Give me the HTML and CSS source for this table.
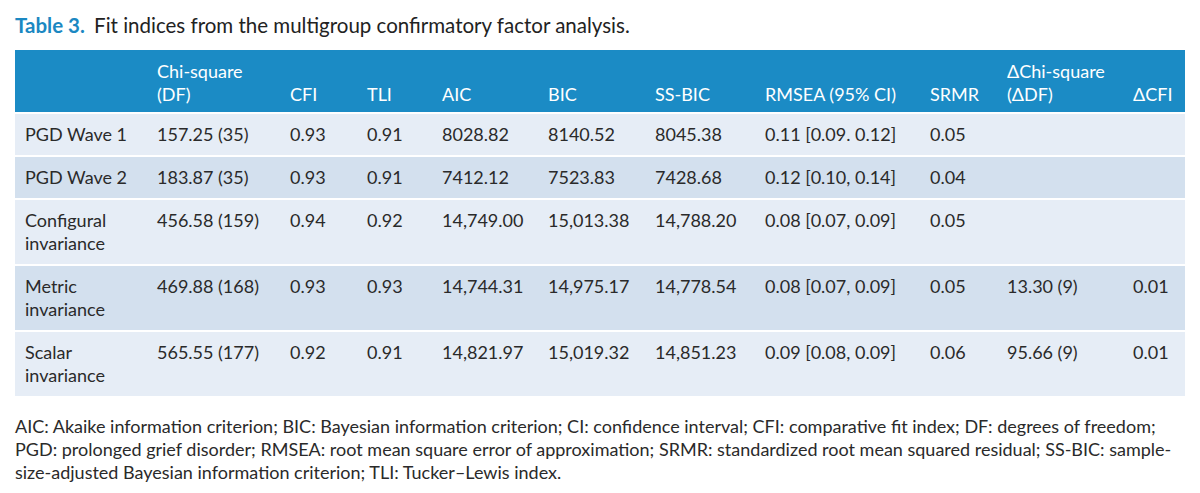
FILE: index.html
```html
<!DOCTYPE html>
<html lang="en">
<head>
<meta charset="utf-8">
<title>Table 3</title>
<link rel="stylesheet" href="styles.css">
</head>
<body>
<div class="page">
  <p class="caption"><span class="label">Table 3.</span> Fit indices from the multigroup confirmatory factor analysis.</p>
  <table class="fit">
    <colgroup>
      <col class="c1"><col class="c2"><col class="c3"><col class="c4"><col class="c5"><col class="c6"><col class="c7"><col class="c8"><col class="c9"><col class="c10"><col class="c11">
    </colgroup>
    <thead>
      <tr>
        <th></th>
        <th>Chi-square<br>(DF)</th>
        <th>CFI</th>
        <th>TLI</th>
        <th>AIC</th>
        <th>BIC</th>
        <th>SS-BIC</th>
        <th>RMSEA (95% CI)</th>
        <th>SRMR</th>
        <th>ΔChi-square<br>(ΔDF)</th>
        <th>ΔCFI</th>
      </tr>
    </thead>
    <tbody>
      <tr class="odd">
        <td>PGD Wave 1</td><td>157.25 (35)</td><td>0.93</td><td>0.91</td><td>8028.82</td><td>8140.52</td><td>8045.38</td><td>0.11 [0.09. 0.12]</td><td>0.05</td><td></td><td></td>
      </tr>
      <tr class="even">
        <td>PGD Wave 2</td><td>183.87 (35)</td><td>0.93</td><td>0.91</td><td>7412.12</td><td>7523.83</td><td>7428.68</td><td>0.12 [0.10, 0.14]</td><td>0.04</td><td></td><td></td>
      </tr>
      <tr class="odd">
        <td>Configural invariance</td><td>456.58 (159)</td><td>0.94</td><td>0.92</td><td>14,749.00</td><td>15,013.38</td><td>14,788.20</td><td>0.08 [0.07, 0.09]</td><td>0.05</td><td></td><td></td>
      </tr>
      <tr class="even">
        <td>Metric invariance</td><td>469.88 (168)</td><td>0.93</td><td>0.93</td><td>14,744.31</td><td>14,975.17</td><td>14,778.54</td><td>0.08 [0.07, 0.09]</td><td>0.05</td><td>13.30 (9)</td><td>0.01</td>
      </tr>
      <tr class="odd">
        <td>Scalar invariance</td><td>565.55 (177)</td><td>0.92</td><td>0.91</td><td>14,821.97</td><td>15,019.32</td><td>14,851.23</td><td>0.09 [0.08, 0.09]</td><td>0.06</td><td>95.66 (9)</td><td>0.01</td>
      </tr>
    </tbody>
  </table>
  <p class="note">AIC: Akaike information criterion; BIC: Bayesian information criterion; CI: confidence interval; CFI: comparative fit index; DF: degrees of freedom; PGD: prolonged grief disorder; RMSEA: root mean square error of approximation; SRMR: standardized root mean squared residual; SS-BIC: sample-size-adjusted Bayesian information criterion; TLI: Tucker–Lewis index.</p>
</div>
</body>
</html>
```
FILE: styles.css
```css
html, body {
  margin: 0;
  padding: 0;
  background: #ffffff;
}
body {
  font-family: "Lato", "Open Sans", sans-serif;
  color: #2a2a2a;
}
.page {
  padding: 13px 15px 0 15px;
  width: 1170px;
}
.caption {
  margin: 0;
  font-size: 20.5px;
  line-height: 24px;
  color: #222;
}
.caption .label {
  color: #1b88c2;
  font-weight: 700;
  margin-right: 4px;
}
.fit {
  margin-top: 13px;
  width: 1170px;
  table-layout: fixed;
  border-collapse: separate;
  border-spacing: 0;
  font-size: 18px;
}
.c1 { width: 132px; }
.c2 { width: 133px; }
.c3 { width: 77px; }
.c4 { width: 75px; }
.c5 { width: 106px; }
.c6 { width: 107px; }
.c7 { width: 110px; }
.c8 { width: 165px; }
.c9 { width: 77px; }
.c10 { width: 126px; }
.c11 { width: 62px; }
.fit th {
  background: #1b8bc5;
  color: #ffffff;
  font-weight: 400;
  text-align: left;
  vertical-align: bottom;
  padding: 10px 0 6px 10px;
  line-height: 23px;
  border-bottom: 2px solid #ffffff;
}
.fit td {
  text-align: left;
  vertical-align: top;
  padding: 9px 0 9px 10px;
  line-height: 23px;
  border-bottom: 2px solid #ffffff;
}
.fit tr.odd td { background: #e6edf6; }
.fit tr.even td { background: #d3e0ee; }
.note {
  margin: 17px 0 0 0;
  font-size: 18px;
  line-height: 23px;
  color: #2a2a2a;
}
```
